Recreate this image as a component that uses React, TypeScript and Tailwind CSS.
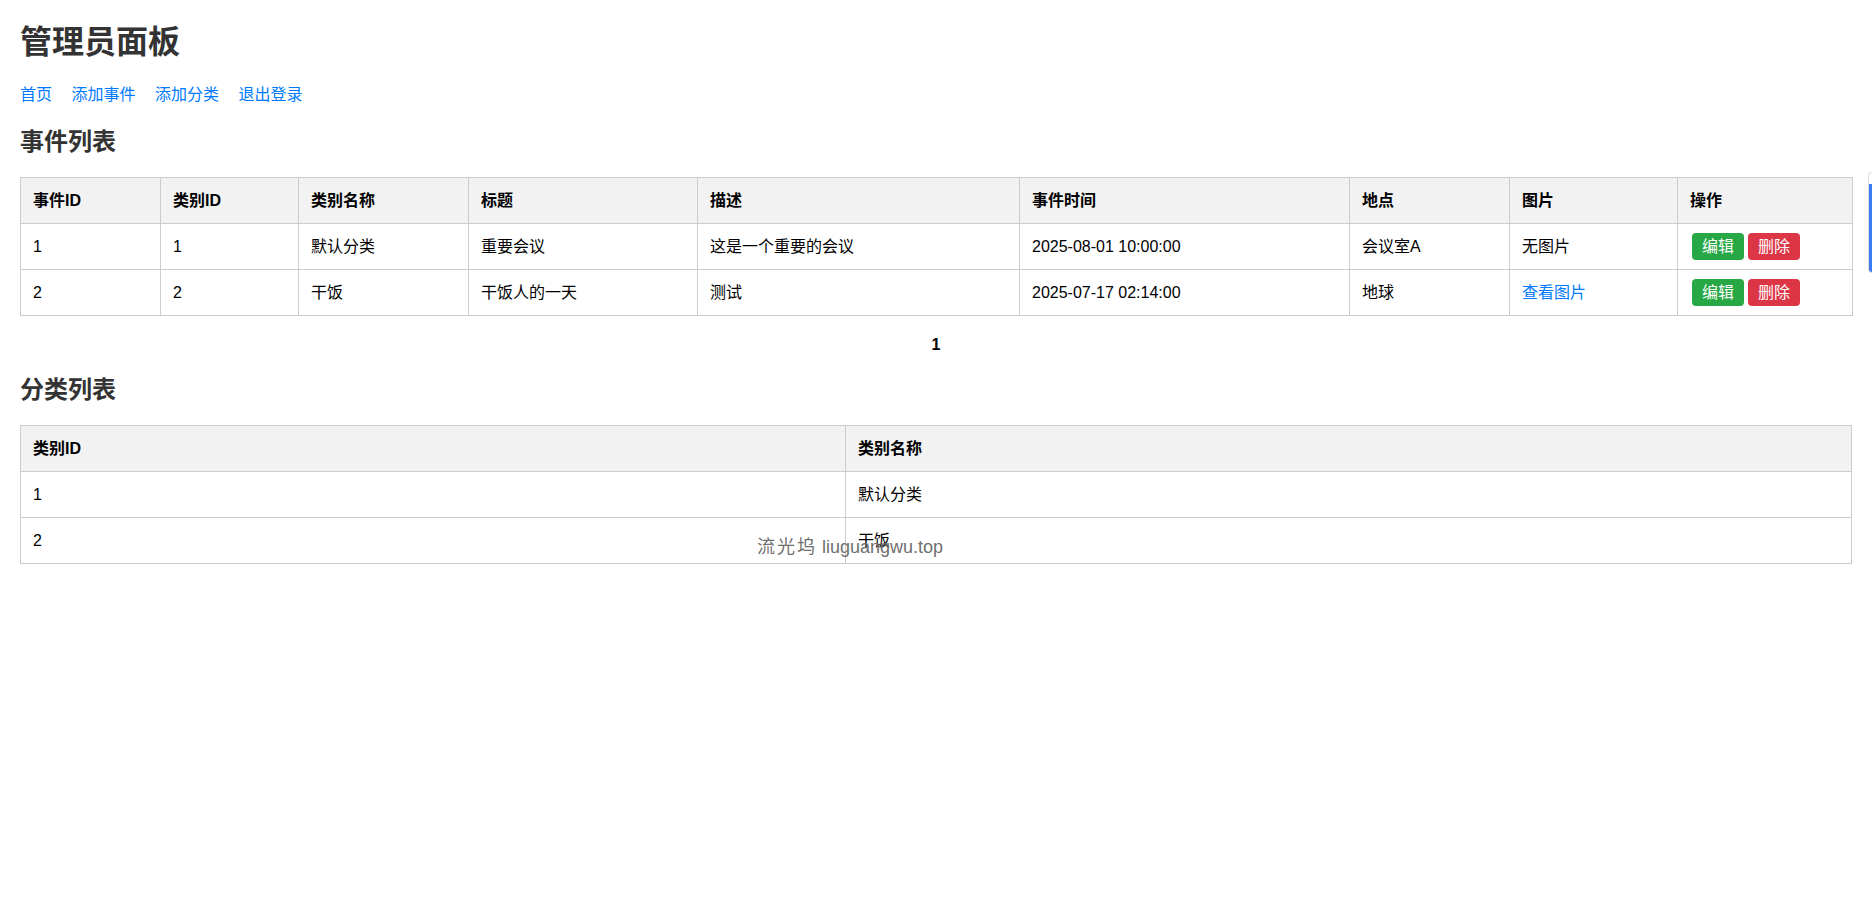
import React from "react";

const events = [
    { id: 1, catId: 1, catName: "默认分类", title: "重要会议", desc: "这是一个重要的会议", time: "2025-08-01 10:00:00", place: "会议室A", image: null },
    { id: 2, catId: 2, catName: "干饭", title: "干饭人的一天", desc: "测试", time: "2025-07-17 02:14:00", place: "地球", image: "查看图片" },
];

const categories = [
    { id: 1, name: "默认分类" },
    { id: 2, name: "干饭" },
];

const eventHeaders = ["事件ID", "类别ID", "类别名称", "标题", "描述", "事件时间", "地点", "图片", "操作"];
const eventWidths = ["w-[140px]", "w-[138px]", "w-[170px]", "w-[229px]", "w-[322px]", "w-[330px]", "w-[160px]", "w-[168px]", "w-[175px]"];

const th = "border border-[#ccc] bg-[#f2f2f2] px-[12px] py-[12px] text-left font-bold leading-[21px]";
const td = "border border-[#ccc] px-[12px] py-[12px] text-left leading-[21px]";

const App = () => {
    return (
        <div className="relative min-h-[900px] bg-white px-[20px] pt-[21px] text-[16px] text-black font-['Liberation_Sans','Noto_Sans_CJK_SC',sans-serif]">
            <h1 className="text-[32px] font-bold leading-[42px] text-[#333]">管理员面板</h1>

            <nav className="mt-[21px] flex gap-[19.5px] leading-[21px] text-[#007bff]">
                <a href="#">首页</a>
                <a href="#">添加事件</a>
                <a href="#">添加分类</a>
                <a href="#">退出登录</a>
            </nav>

            <h2 className="mt-[21px] text-[24px] font-bold leading-[32px] text-[#333]">事件列表</h2>
            <table className="mt-[19px] w-full table-fixed border-collapse">
                <colgroup>
                    {eventWidths.map((w, i) => (
                        <col key={i} className={w} />
                    ))}
                </colgroup>
                <thead>
                    <tr>
                        {eventHeaders.map((h) => (
                            <th key={h} className={th}>{h}</th>
                        ))}
                    </tr>
                </thead>
                <tbody>
                    {events.map((ev) => (
                        <tr key={ev.id}>
                            <td className={td}>{ev.id}</td>
                            <td className={td}>{ev.catId}</td>
                            <td className={td}>{ev.catName}</td>
                            <td className={td}>{ev.title}</td>
                            <td className={td}>{ev.desc}</td>
                            <td className={td}>{ev.time}</td>
                            <td className={td}>{ev.place}</td>
                            <td className={td}>
                                {ev.image ? <a href="#" className="text-[#007bff]">{ev.image}</a> : "无图片"}
                            </td>
                            <td className={td}>
                                <div className="flex h-[21px] items-center gap-[4px] pl-[2px]">
                                    <a href="#" className="flex h-[27px] items-center rounded-[4px] bg-[#28a745] px-[10px] text-white">编辑</a>
                                    <a href="#" className="flex h-[27px] items-center rounded-[4px] bg-[#dc3545] px-[10px] text-white">删除</a>
                                </div>
                            </td>
                        </tr>
                    ))}
                </tbody>
            </table>

            <div className="mt-[19px] text-center text-[16px] font-bold leading-[19px]">1</div>

            <h2 className="mt-[20px] text-[24px] font-bold leading-[32px] text-[#333]">分类列表</h2>
            <table className="mt-[19px] w-full table-fixed border-collapse">
                <colgroup>
                    <col className="w-[825px]" />
                    <col />
                </colgroup>
                <thead>
                    <tr>
                        <th className={th}>类别ID</th>
                        <th className={th}>类别名称</th>
                    </tr>
                </thead>
                <tbody>
                    {categories.map((c) => (
                        <tr key={c.id}>
                            <td className={td}>{c.id}</td>
                            <td className={td}>{c.name}</td>
                        </tr>
                    ))}
                </tbody>
            </table>

            {/* watermark */}
            <div className="pointer-events-none absolute left-[757px] top-[536px] whitespace-nowrap text-[18px] leading-[22px] text-[#6f6f6f]">
                <span className="tracking-[2px]">流光坞</span> liuguangwu.top
            </div>

            {/* side widget peeking in from the right edge */}
            <div className="fixed right-0 top-[172px] flex h-[101px] w-[4px] flex-col overflow-hidden rounded-l-[4px] border border-r-0 border-[#ddd]">
                <div className="h-[11px] bg-white" />
                <div className="flex-1 bg-[#3b7cf3]" />
            </div>
        </div>
    );
};

export default App;
